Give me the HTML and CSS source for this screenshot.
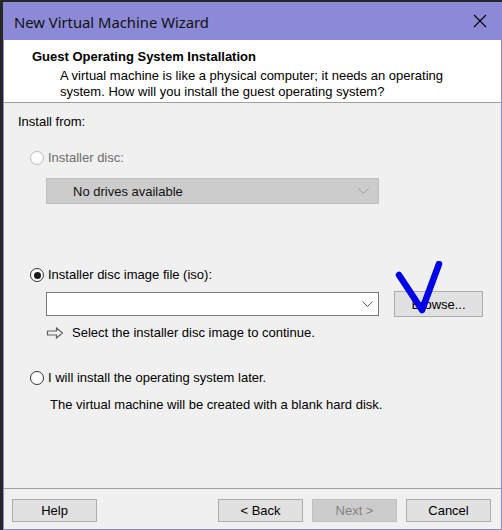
FILE: index.html
```html
<!DOCTYPE html>
<html>
<head>
<meta charset="utf-8">
<link rel="stylesheet" href="styles.css">
</head>
<body>
<div class="window">
  <div class="titlebar">
    <span class="title">New Virtual Machine Wizard</span>
    <svg class="close" width="14" height="14" viewBox="0 0 14 14"><path d="M1 1 L13 13 M13 1 L1 13" stroke="#000" stroke-width="1.1" fill="none"/></svg>
  </div>
  <div class="header">
    <div class="h-title">Guest Operating System Installation</div>
    <div class="h-desc">A virtual machine is like a physical computer; it needs an operating<br>system. How will you install the guest operating system?</div>
  </div>
  <div class="content">
    <div class="label">Install from:</div>
    <div class="radio-row disabled r1"><span class="radio"></span><span>Installer disc:</span></div>
    <div class="combo combo-disabled"><span class="combo-text">No drives available</span>
      <svg class="chev" width="11" height="7" viewBox="0 0 11 7"><path d="M0.5 0.5 L5.5 5.5 L10.5 0.5" stroke="#a0a0a0" fill="none"/></svg>
    </div>
    <div class="radio-row r2"><span class="radio checked"></span><span>Installer disc image file (iso):</span></div>
    <div class="input-row">
      <div class="combo combo-edit">
        <svg class="chev" width="11" height="7" viewBox="0 0 11 7"><path d="M0.5 0.5 L5.5 5.5 L10.5 0.5" stroke="#606060" fill="none"/></svg>
      </div>
      <div class="btn browse">Browse...</div>
    </div>
    <div class="hint">
      <svg class="arrow" width="18" height="12" viewBox="0 0 18 12"><path d="M1.5 4 H10.5 V1 L16.5 6 L10.5 11 V8 H1.5 Z" stroke="#606060" stroke-width="1.2" fill="#f0f0f0" stroke-linejoin="miter"/></svg>
      <span>Select the installer disc image to continue.</span>
    </div>
    <div class="radio-row r3"><span class="radio"></span><span>I will install the operating system later.</span></div>
    <div class="later-desc">The virtual machine will be created with a blank hard disk.</div>
    <svg class="check" width="60" height="70" viewBox="0 0 60 70"><path d="M4 14 L27 49 L44 3" stroke="#0000e6" stroke-width="6.5" fill="none" stroke-linecap="round" stroke-linejoin="round"/></svg>
  </div>
  <div class="footer">
    <div class="btn">Help</div>
    <div class="spacer"></div>
    <div class="btn">&lt; Back</div>
    <div class="btn btn-disabled">Next &gt;</div>
    <div class="btn">Cancel</div>
  </div>
</div>
</body>
</html>
```
FILE: styles.css
```css
html, body {
  margin: 0;
  padding: 0;
  background: #262626;
  width: 502px;
  height: 530px;
  overflow: hidden;
}
body {
  font-family: "Liberation Sans", Arial, sans-serif;
  font-size: 13px;
  color: #000;
}
.window {
  margin: 2px 0 0 3px;
  width: 499px;
  height: 528px;
  box-sizing: border-box;
  border: 1px solid #8c8ad6;
  border-top: none;
  background: #f0f0f0;
  display: flex;
  flex-direction: column;
  position: relative;
}
.titlebar {
  height: 38px;
  margin: 0 -1px;
  background: #8c8ad6;
  display: flex;
  align-items: center;
  padding: 0 16px 0 11px;
  flex-shrink: 0;
}
.title {
  font-family: "Noto Sans", sans-serif;
  font-size: 14.8px;
  color: #111;
  flex: 1;
  padding-top: 1px;
}
.close {
  display: block;
  margin-right: -1px;
}
.header {
  background: #fff;
  height: 63px;
  border-bottom: 1px solid #a0a0a0;
  padding: 9px 0 0 28px;
  box-sizing: border-box;
  flex-shrink: 0;
}
.h-title {
  font-weight: bold;
  line-height: 16px;
}
.h-desc {
  margin: 3px 0 0 28px;
  line-height: 16px;
}
.content {
  flex: 1;
  padding: 11px 0 0 14px;
  position: relative;
}
.label {
  line-height: 16px;
}
.radio-row {
  display: flex;
  align-items: center;
  line-height: 16px;
  margin-left: 12px;
}
.radio {
  box-sizing: border-box;
  width: 14px;
  height: 14px;
  border: 1px solid #333;
  border-radius: 50%;
  background: #fff;
  margin-right: 4px;
  position: relative;
  flex-shrink: 0;
}
.disabled {
  color: #6d6d6d;
}
.disabled .radio {
  border-color: #bcbcbc;
  background: #fcfcfc;
}
.radio.checked::after {
  content: "";
  position: absolute;
  left: 2.5px;
  top: 2.5px;
  width: 7px;
  height: 7px;
  border-radius: 50%;
  background: #1a1a1a;
}
.r1 { margin-top: 20px; }
.r2 { margin-top: 63px; }
.r3 { margin-top: 29px; }
.combo {
  box-sizing: border-box;
  width: 333px;
  display: flex;
  align-items: center;
  justify-content: space-between;
}
.combo-disabled {
  margin: 12px 0 0 28px;
  height: 26px;
  background: #cccccc;
  border: 1px solid #bfbfbf;
  padding: 0 9px 0 26px;
}
.combo-disabled .combo-text {
  color: #111;
}
.combo-edit {
  height: 24px;
  background: #fff;
  border: 1px solid #7a7a7a;
  justify-content: flex-end;
  padding-right: 5px;
}
.chev {
  display: block;
}
.input-row {
  margin: 8px 0 0 28px;
  display: flex;
  align-items: center;
  height: 26px;
}
.btn {
  box-sizing: border-box;
  background: #e1e1e1;
  border: 1px solid #adadad;
  display: flex;
  align-items: center;
  justify-content: center;
  width: 85px;
  height: 23px;
}
.browse {
  margin-left: 15px;
  width: 89px;
  height: 26px;
}
.hint {
  margin: 8px 0 0 28px;
  display: flex;
  align-items: center;
  line-height: 16px;
}
.arrow {
  display: block;
  margin-right: 8px;
}
.later-desc {
  margin: 11px 0 0 32px;
  line-height: 16px;
}
.check {
  position: absolute;
  left: 391px;
  top: 158px;
}
.footer {
  flex-shrink: 0;
  height: 41px;
  border-top: 1px solid #a0a0a0;
  box-sizing: border-box;
  display: flex;
  align-items: flex-start;
  padding: 10px 10px 0 8px;
  gap: 9px;
}
.spacer {
  flex: 1;
}
.btn-disabled {
  background: #cccccc;
  border-color: #bfbfbf;
  color: #838383;
}
```
